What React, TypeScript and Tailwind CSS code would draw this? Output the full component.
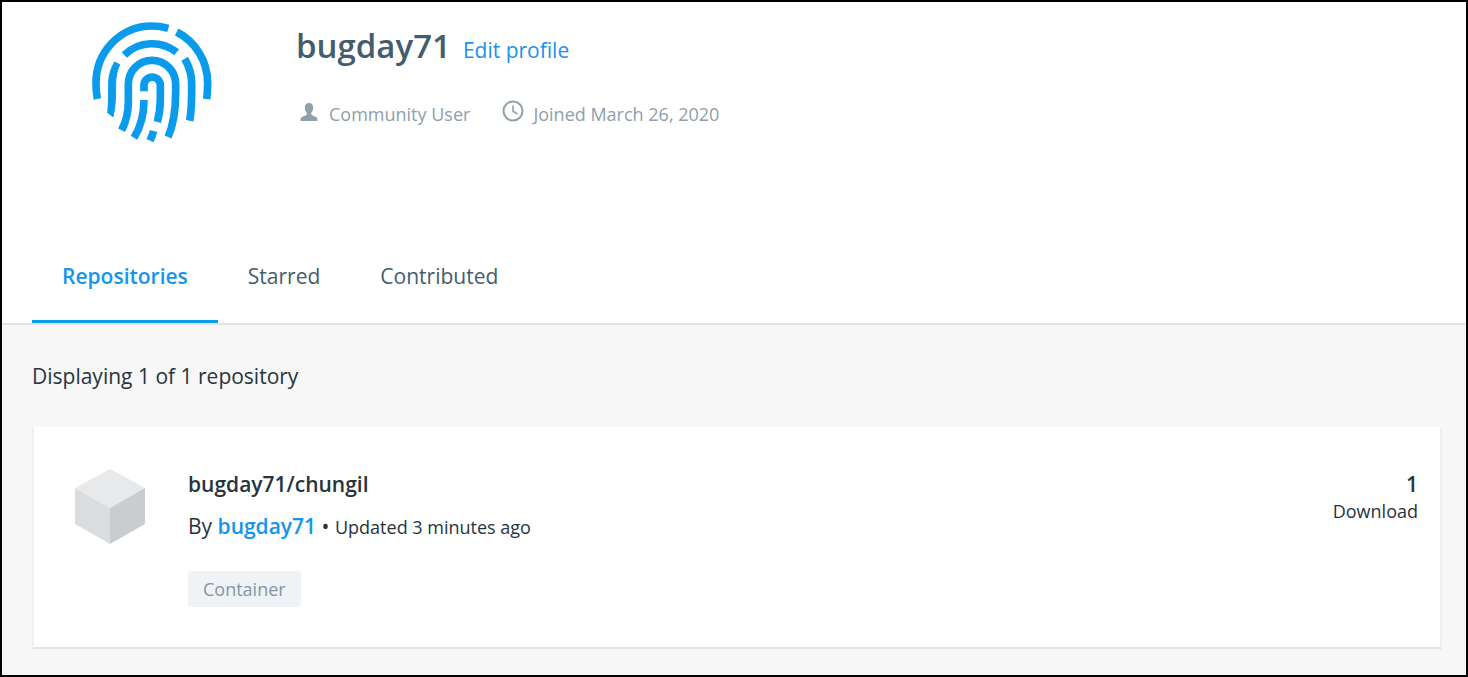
import React from "react";

function FingerprintAvatar() {
  return (
    <svg
      viewBox="30 30 360 360"
      className="size-[120px] shrink-0 overflow-visible"
      fill="none"
      stroke="#0b9bed"
      strokeWidth="23"
      role="img"
      aria-label="Profile avatar"
    >
      <path d="M46 261Q42 238 42 213A167 171 0 0 1 209 42Q235 42 259 49" />
      <path d="M284 60A167 171 0 0 1 377 213Q377 238 374 261" />
      <path d="M127 129A119 119 0 0 1 284 121" />
      <path
        d="M98 150L113 158C105 175 101 195 101 215C101 250 101 283 93 314L77 302C79 283 80 250 80 215C80 190 87 168 98 150Z"
        fill="#0b9bed"
        strokeWidth="3"
        strokeLinejoin="round"
      />
      <path d="M308 140Q329 175 329 215C329 255 330 290 323 326" />
      <path d="M119 355C134 325 139 300 139 270V216A71 71 0 0 1 281 216V240C281 290 276 335 258 375" />
      <path d="M186 238V220A24.500 24.500 0 0 1 235 220V260C235 290 232 308 226 330" />
      <path d="M186 264C186 310 178 342 156 377" />
      <path d="M215 357Q211 371 204 386" />
    </svg>
  );
}

function PersonIcon() {
  return (
    <svg viewBox="0 0 18 18" className="h-[18px] w-[18px]" fill="#90a0ab" aria-hidden="true">
      <path d="M9 0C6.300 0 4.800 1.900 4.800 4.600C4.800 6.700 5.500 8.600 6.700 9.600V11C6.700 11.900 6 12.200 4.800 12.700C2.200 13.600.600 14.400.500 16.200V18H17.500V16.200C17.400 14.400 15.800 13.600 13.200 12.700C12 12.200 11.300 11.900 11.300 11V9.600C12.500 8.600 13.200 6.700 13.200 4.600C13.200 1.900 11.700 0 9 0Z" />
    </svg>
  );
}

function ClockIcon() {
  return (
    <svg viewBox="0 0 22 22" className="size-[22px]" fill="none" stroke="#90a0ab" strokeWidth="2" aria-hidden="true">
      <circle cx="11" cy="11" r="9.500" />
      <path d="M11 5.500V11.200L15.500 14" strokeWidth="1.600" />
    </svg>
  );
}

function CubeIcon() {
  return (
    <svg viewBox="0 0 70 75" className="h-[75px] w-[70px] shrink-0" aria-hidden="true">
      <path d="M35 0L70 19L35 39L0 19Z" fill="#e8e9eb" />
      <path d="M0 19L35 39V75L0 55Z" fill="#dadcde" />
      <path d="M70 19L35 39V75L70 55Z" fill="#c9cdd0" />
    </svg>
  );
}

const tabs = ["Repositories", "Starred", "Contributed"];

export default function App() {
  return (
    <div className="flex min-h-screen flex-col border-2 border-black bg-[#f7f7f7] font-['Open_Sans',sans-serif] text-[#254356]">
      <header className="bg-white">
        <div className="flex gap-[84px] pt-5 pl-[90px]">
          <FingerprintAvatar />
          <div className="pt-1">
            <div className="flex items-baseline gap-3">
              <h1 className="text-[33px] leading-10 font-semibold text-[#445d6e]">bugday71</h1>
              <a href="#edit" className="text-[21px] leading-7 text-[#1c90ed]">
                Edit profile
              </a>
            </div>
            <div className="mt-[34px] flex gap-8 text-[18px] leading-7 text-[#8f9ea8]">
              <div className="flex gap-[11px] pl-1">
                <span className="pt-[3px]">
                  <PersonIcon />
                </span>
                <span>Community User</span>
              </div>
              <div className="flex gap-[9px]">
                <ClockIcon />
                <span>Joined March 26, 2020</span>
              </div>
            </div>
          </div>
        </div>
        <nav className="mt-[92px] flex border-b-2 border-[#e0e4e7] pl-[30px]">
          {tabs.map((tab, i) => (
            <a
              key={tab}
              href={"#" + tab.toLowerCase()}
              aria-current={i === 0 ? "page" : undefined}
              className={
                i === 0
                  ? "border-b-[3px] border-[#0b9bed] px-[30px] pt-7 pb-[30px] text-[21px] leading-7 font-semibold text-[#1495ed]"
                  : "border-b-[3px] border-transparent px-[30px] pt-7 pb-[30px] text-[21px] leading-7 text-[#445d6e]"
              }
            >
              {tab}
            </a>
          ))}
        </nav>
      </header>

      <main className="flex-1 pt-[37px] pr-6 pb-[26px] pl-[30px] text-[#27343d]">
        <p className="text-[21px] leading-7">Displaying 1 of 1 repository</p>
        <article className="mt-[37px] flex border-x-2 border-b-2 border-x-[#eff0f1] border-b-[#e2e4e6] bg-white pt-[42px] pr-[22px] pb-10 pl-[41px]">
          <CubeIcon />
          <div className="ml-[43px] flex-1 pt-px">
            <h2 className="text-[21px] leading-7 font-semibold">bugday71/chungil</h2>
            <p className="mt-[14px] text-[21px] leading-7">
              By{" "}
              <a href="#bugday71" className="font-semibold text-[#1495ed]">
                bugday71
              </a>{" "}
              • <span className="text-[18px]">Updated 3 minutes ago</span>
            </p>
            <span className="mt-[30px] inline-block rounded-[3px] bg-[#eff3f6] px-[15px] py-1 text-[18px] leading-7 text-[#8596a3]">
              Container
            </span>
          </div>
          <div className="pt-px text-right">
            <div className="text-[21px] leading-7 font-semibold">1</div>
            <div className="text-[18px] leading-[26px]">Download</div>
          </div>
        </article>
      </main>
    </div>
  );
}
